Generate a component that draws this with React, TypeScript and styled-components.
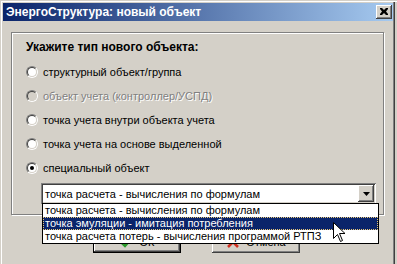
import React from 'react';
import styled, { createGlobalStyle } from 'styled-components';

const Global = createGlobalStyle`
  html, body { margin: 0; padding: 0; background: #D4D0C8; }
  body { width: 397px; height: 264px; overflow: hidden; font-family: "Liberation Sans", Arial, sans-serif; }
  * { box-sizing: border-box; }
`;

const Win = styled.div`
  position: relative;
  width: 397px;
  height: 264px;
  background: #D4D0C8;
  padding: 3px 4px 0 3px;
  box-shadow: inset 1px 1px #D4D0C8, inset 2px 2px #fff, inset -2px 0 #D4D0C8, inset -3px 0 #404040, inset -4px 0 #808080;
  display: flex;
  flex-direction: column;
  overflow: hidden;
`;

const Caption = styled.div`
  height: 18px;
  background: linear-gradient(to right, #0A246A, #A6CAF0);
  display: flex;
  align-items: center;
  justify-content: space-between;
  padding: 0 1px 0 3px;
`;

const Title = styled.span`
  color: #fff;
  font: bold 12px "Liberation Sans", Arial, sans-serif;
`;

const CloseBtn = styled.div`
  width: 16px;
  height: 14px;
  background: #D4D0C8;
  box-shadow: inset -1px -1px #404040, inset 1px 1px #fff, inset -2px -2px #808080, inset 2px 2px #D4D0C8;
  display: flex;
  align-items: center;
  justify-content: center;
  padding: 0 1px 1px 0;
`;

const Body = styled.div`
  padding: 11px 0 0 8px;
  display: flex;
  flex-direction: column;
`;

const GroupBox = styled.div`
  border: 1px solid #808080;
  box-shadow: 1px 1px 0 #fff, inset 1px 1px 0 #fff;
  padding: 7px 0 10px 14px;
  display: flex;
  flex-direction: column;
  width: 373px;
`;

const Heading = styled.div`
  font: bold 12px "Liberation Sans", Arial, sans-serif;
  line-height: 14px;
  height: 14px;
  color: #000;
  margin-bottom: 6px;
`;

const RadioRow = styled.div`
  height: 24px;
  display: flex;
  align-items: center;
  gap: 5px;
`;

const Radio = styled.span<{ $checked?: boolean; $disabled?: boolean }>`
  position: relative;
  width: 12px;
  height: 12px;
  flex: none;
  border-radius: 50%;
  border: 1px solid;
  border-color: #808080 #fff #fff #808080;
  &::before {
    content: '';
    position: absolute;
    inset: 0;
    border-radius: 50%;
    border: 1px solid;
    border-color: #404040 #D4D0C8 #D4D0C8 #404040;
    background: ${(p) => (p.$disabled ? '#D4D0C8' : '#fff')};
  }
  &::after {
    content: '';
    position: absolute;
    left: 3px;
    top: 3px;
    width: 4px;
    height: 4px;
    border-radius: 50%;
    background: #000;
    display: ${(p) => (p.$checked ? 'block' : 'none')};
  }
`;

const Label = styled.span<{ $disabled?: boolean }>`
  font-size: 11px;
  color: ${(p) => (p.$disabled ? '#808080' : '#000')};
  text-shadow: ${(p) => (p.$disabled ? '1px 1px 0 #fff' : 'none')};
  white-space: nowrap;
`;

const Combo = styled.div`
  margin: 3px 0 0 15px;
  width: 335px;
  height: 21px;
  background: #fff;
  box-shadow: inset 1px 1px #808080, inset -1px -1px #fff, inset 2px 2px #404040, inset -2px -2px #D4D0C8;
  display: flex;
  align-items: center;
  padding: 2px 2px 2px 4px;
`;

const ComboText = styled.span`
  flex: 1;
  font-size: 11px;
  white-space: nowrap;
  color: #000;
`;

const DropBtn = styled.div`
  width: 16px;
  height: 17px;
  background: #D4D0C8;
  box-shadow: inset -1px -1px #404040, inset 1px 1px #fff, inset -2px -2px #808080, inset 2px 2px #D4D0C8;
  display: flex;
  align-items: center;
  justify-content: center;
`;

const ButtonRow = styled.div`
  margin-top: 15px;
  padding-left: 82px;
  display: flex;
  gap: 31px;
`;

const Button = styled.div<{ $default?: boolean }>`
  width: 88px;
  height: 23px;
  background: #D4D0C8;
  border: ${(p) => (p.$default ? '1px solid #000' : 'none')};
  box-shadow: inset -1px -1px #404040, inset 1px 1px #fff, inset -2px -2px #808080, inset 2px 2px #D4D0C8;
  display: flex;
  align-items: center;
  justify-content: center;
  gap: 6px;
  font-size: 11px;
  color: #000;
`;

const ListPopup = styled.div`
  position: absolute;
  left: 42px;
  top: 203px;
  width: 337px;
  background: #fff;
  border: 1px solid #000;
  display: flex;
  flex-direction: column;
`;

const ListItem = styled.div<{ $sel?: boolean }>`
  height: 13px;
  line-height: 13px;
  font-size: 11px;
  padding-left: 2px;
  white-space: nowrap;
  color: ${(p) => (p.$sel ? '#fff' : '#000')};
  background: ${(p) => (p.$sel ? '#0A246A' : '#fff')};
  outline: ${(p) => (p.$sel ? '1px dotted #E8C878' : 'none')};
  outline-offset: -1px;
`;

const Cursor = styled.svg`
  position: absolute;
  left: 333px;
  top: 222px;
`;

const radios = [
  { t: 'структурный объект/группа' },
  { t: 'объект учета (контроллер/УСПД)', d: true },
  { t: 'точка учета внутри объекта учета' },
  { t: 'точка учета на основе выделенной' },
  { t: 'специальный объект', c: true },
];

const items = [
  'точка расчета - вычисления по формулам',
  'точка эмуляции - имитация потребления',
  'точка расчета потерь - вычисления программой РТПЗ',
];

export default function App() {
  return (
    <>
      <Global />
      <Win>
        <Caption>
          <Title>ЭнергоСтруктура: новый объект</Title>
          <CloseBtn>
            <svg width="8" height="7" viewBox="0 0 8 7">
              <path d="M0 0h2l2 2 2-2h2v1L6 3.5 8 6v1H6L4 5 2 7H0V6l2-2.5L0 1z" fill="#000" />
            </svg>
          </CloseBtn>
        </Caption>
        <Body>
          <GroupBox>
            <Heading>Укажите тип нового объекта:</Heading>
            {radios.map((r) => (
              <RadioRow key={r.t}>
                <Radio $checked={r.c} $disabled={r.d} />
                <Label $disabled={r.d}>{r.t}</Label>
              </RadioRow>
            ))}
            <Combo>
              <ComboText>{items[0]}</ComboText>
              <DropBtn>
                <svg width="7" height="4" viewBox="0 0 7 4">
                  <path d="M0 0h7L3.5 4z" fill="#000" />
                </svg>
              </DropBtn>
            </Combo>
          </GroupBox>
          <ButtonRow>
            <Button $default>
              <svg width="14" height="12" viewBox="0 0 14 12">
                <path d="M1 6l4 4 8-9" stroke="#2A9A2A" strokeWidth="2.5" fill="none" />
              </svg>
              ОК
            </Button>
            <Button>
              <svg width="14" height="12" viewBox="0 0 14 12">
                <path d="M2 1l10 10M12 1L2 11" stroke="#D03020" strokeWidth="2.5" fill="none" />
              </svg>
              Отмена
            </Button>
          </ButtonRow>
        </Body>
        <ListPopup>
          {items.map((it, i) => (
            <ListItem key={it} $sel={i === 1}>{it}</ListItem>
          ))}
        </ListPopup>
        <Cursor width="13" height="21" viewBox="0 0 13 21">
          <path d="M0.5 0.5v16l4-4 3 7 2-1-3-7h5.5z" fill="#fff" stroke="#000" strokeWidth="1" />
        </Cursor>
      </Win>
    </>
  );
}
